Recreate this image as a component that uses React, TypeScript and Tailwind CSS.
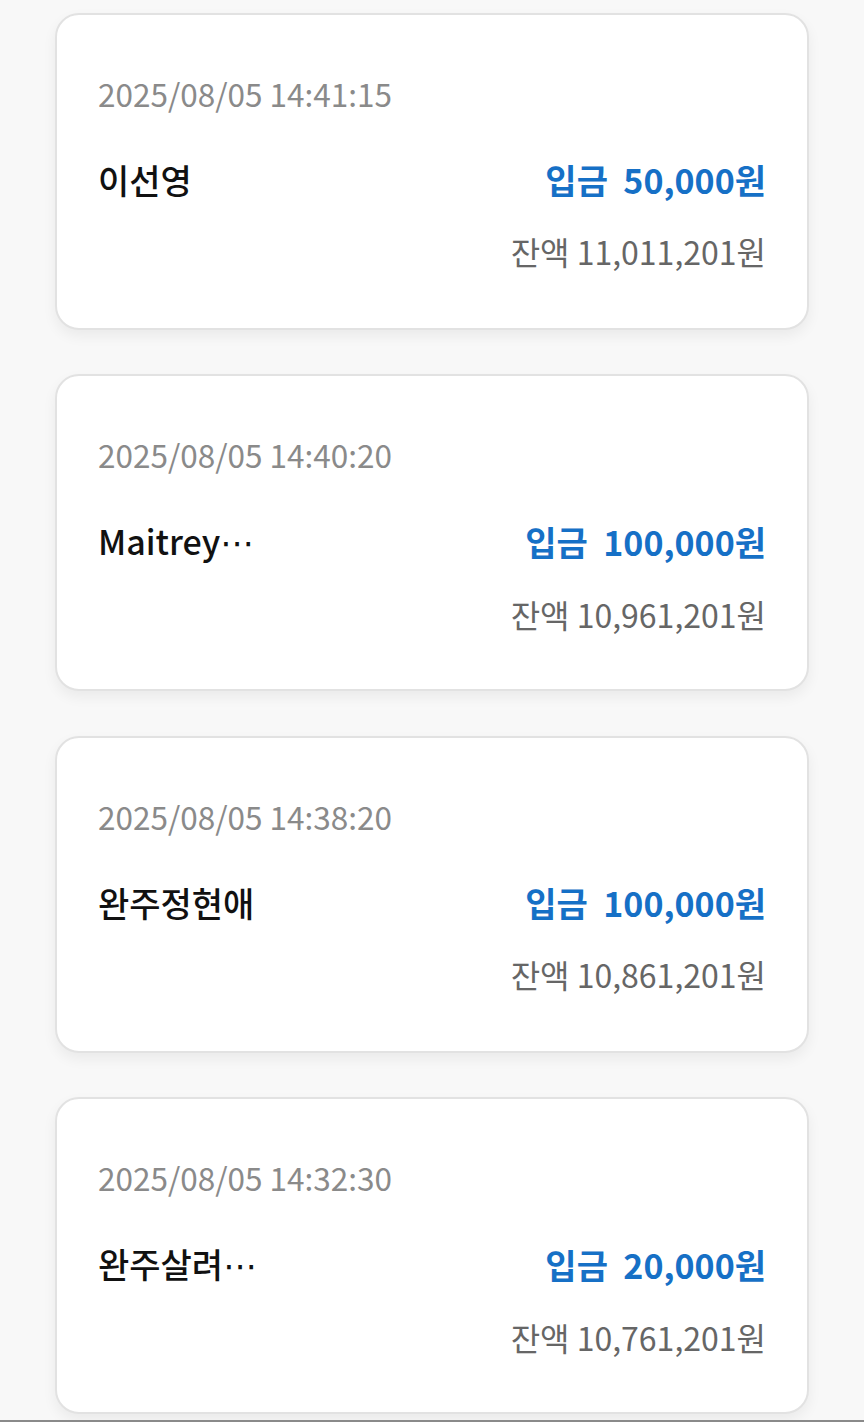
import React from "react";

type Tx = {
  time: string;
  name: string;
  cut?: boolean;
  amount: string;
  balance: string;
};

const txs: Tx[] = [
  { time: "2025/08/05 14:41:15", name: "이선영", amount: "50,000원", balance: "11,011,201원" },
  { time: "2025/08/05 14:40:20", name: "Maitrey", cut: true, amount: "100,000원", balance: "10,961,201원" },
  { time: "2025/08/05 14:38:20", name: "완주정현애", amount: "100,000원", balance: "10,861,201원" },
  { time: "2025/08/05 14:32:30", name: "완주살려", cut: true, amount: "20,000원", balance: "10,761,201원" },
];

export default function App() {
  return (
    <div
      className="h-[1422px] overflow-hidden bg-[#f8f8f8] border-b-2 border-[#8a8a8a]"
      style={{ fontFamily: '"Noto Sans CJK KR", "Noto Sans", sans-serif' }}
    >
      <div className="flex flex-col gap-[44.3px] pt-[13px] px-[55px]">
        {txs.map((t) => (
          <div
            key={t.time}
            className="h-[317px] shrink-0 bg-white rounded-[24px] border-2 border-[#e2e2e2] shadow-[0_6px_14px_rgba(0,0,0,0.06)] px-[41px] pt-[56px]"
          >
            <div className="text-[31.5px] leading-[44px] text-[#8a8a8a]">{t.time}</div>
            <div className="mt-[43px] flex items-center justify-between leading-[44px]">
              <span className="text-[34px] text-[#111111] font-medium">
                {t.name}
                {t.cut && (
                  <span className="font-normal" style={{ fontFamily: '"DejaVu Sans", sans-serif' }}>
                    ⋯
                  </span>
                )}
              </span>
              <span className="text-[34px] font-bold text-[#1670c6] whitespace-pre">
                {"입금  " + t.amount}
              </span>
            </div>
            <div className="mt-[27px] text-right text-[32px] leading-[44px] text-[#666666]">
              잔액 {t.balance}
            </div>
          </div>
        ))}
      </div>
    </div>
  );
}
